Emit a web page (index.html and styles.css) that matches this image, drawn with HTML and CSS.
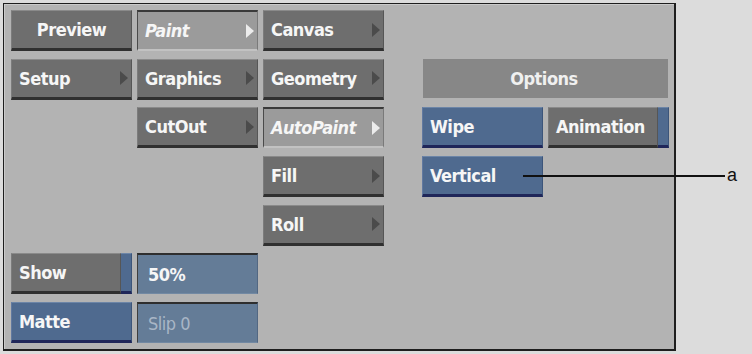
FILE: index.html
```html
<!DOCTYPE html>
<html>
<head>
<link rel="stylesheet" href="styles.css">
</head>
<body>

<div class="panel">
  <div class="grid">
    <div class="btn c1 r1 center">Preview</div>
    <div class="btn sel c2 r1">Paint<span class="arrow"></span></div>
    <div class="btn c3 r1">Canvas<span class="arrow"></span></div>

    <div class="btn c1 r2">Setup<span class="arrow"></span></div>
    <div class="btn c2 r2">Graphics<span class="arrow"></span></div>
    <div class="btn c3 r2">Geometry<span class="arrow"></span></div>
    <div class="title r2">Options</div>

    <div class="btn c2 r3">CutOut<span class="arrow"></span></div>
    <div class="btn sel c3 r3">AutoPaint<span class="arrow"></span></div>
    <div class="btn blue c5 r3">Wipe</div>
    <div class="split c6 r3"><div class="face">Animation</div><div class="strip"></div></div>

    <div class="btn c3 r4">Fill<span class="arrow"></span></div>
    <div class="btn blue c5 r4">Vertical</div>

    <div class="btn c3 r5">Roll<span class="arrow"></span></div>

    <div class="split c1 r6"><div class="face">Show</div><div class="strip"></div></div>
    <div class="field c2 r6">50%</div>

    <div class="btn blue c1 r7">Matte</div>
    <div class="field dim c2 r7">Slip 0</div>
  </div>
</div>

<div class="callout"></div>
<div class="callout-label">a</div>

</body>
</html>
```

FILE: styles.css
```css
body {
  margin: 0;
  background-color: #dcdcdc;
  font-family: "DejaVu Sans Condensed", "DejaVu Sans", Verdana, sans-serif;
  font-stretch: condensed;
}

.panel {
  margin: 3px 0 0 3px;
  width: 663px;
  height: 339px;
  background-color: #b3b3b3;
  border-top: 1px solid #1e1e1e;
  border-left: 1px solid #1e1e1e;
  border-right: 2px solid #1e1e1e;
  border-bottom: 2px solid #1e1e1e;
  box-shadow: inset 1px 1px 0 #cacaca;
  padding: 6px 0 0 7px;
}

.grid {
  display: grid;
  grid-template-columns: 121px 121px 121px 28px 121px 121px;
  grid-template-rows: repeat(7, 41px);
  column-gap: 5px;
  row-gap: 7.7px;
}

.c1 { grid-column: 1; }
.c2 { grid-column: 2; }
.c3 { grid-column: 3; }
.c5 { grid-column: 5; }
.c6 { grid-column: 6; }
.r1 { grid-row: 1; }
.r2 { grid-row: 2; }
.r3 { grid-row: 3; }
.r4 { grid-row: 4; }
.r5 { grid-row: 5; }
.r6 { grid-row: 6; }
.r7 { grid-row: 7; }

.btn, .face, .field, .title {
  display: flex;
  align-items: center;
  box-sizing: border-box;
  color: #f6f6f6;
  font-size: 18px;
  font-weight: bold;
  letter-spacing: -0.5px;
  padding-left: 7px;
}

.btn, .face {
  background-color: #6e6e6e;
  border-top: 1px solid #8a8a8a;
  border-left: 1px solid #7c7c7c;
  border-right: 1px solid #565656;
  border-bottom: 3px solid #303030;
}

.btn.center {
  justify-content: center;
  padding-left: 0;
}

.btn.sel {
  background-color: #9b9b9b;
  border-top: 2px solid #3a3a3a;
  border-left: 1px solid #4a4a4a;
  border-right: 1px solid #7a7a7a;
  border-bottom: 2px solid #c2c2c2;
  font-style: italic;
}

.btn.blue {
  background-color: #4f6a8f;
  border-top: 1px solid #6c85a7;
  border-left: 1px solid #6179a0;
  border-right: 1px solid #3c557a;
  border-bottom: 3px solid #1f2659;
}

.arrow {
  margin-left: auto;
  margin-right: 3px;
  width: 0;
  height: 0;
  border-top: 7px solid transparent;
  border-bottom: 7px solid transparent;
  border-left: 8px solid #4b4b4b;
}

.sel .arrow {
  border-left-color: #ececec;
}

.split {
  display: flex;
}

.split .face {
  flex: 1;
}

.strip {
  width: 11px;
  box-sizing: border-box;
  background-color: #4f6a8f;
  border-top: 1px solid #6c85a7;
  border-right: 1px solid #3c557a;
  border-bottom: 3px solid #1f2659;
}

.title {
  grid-column: 5 / 7;
  justify-content: center;
  padding: 0 3px 0 0;
  margin: 0 1px 2px 1px;
  background-color: #878787;
  color: #f0f0f0;
}

.field {
  background-color: #647c97;
  border-top: 2px solid #2e2e2e;
  border-left: 1px solid #3e3e3e;
  border-right: 1px solid #526782;
  border-bottom: 1px solid #7289a3;
  padding-left: 10px;
}

.field.dim {
  color: #a9b6c6;
  font-weight: normal;
}

.callout {
  position: absolute;
  left: 523px;
  top: 175px;
  width: 202px;
  height: 2px;
  background-color: #111;
}

.callout-label {
  position: absolute;
  left: 727px;
  top: 165px;
  font-family: "Liberation Sans", Arial, sans-serif;
  font-size: 18px;
  font-stretch: normal;
  color: #111;
}
```
